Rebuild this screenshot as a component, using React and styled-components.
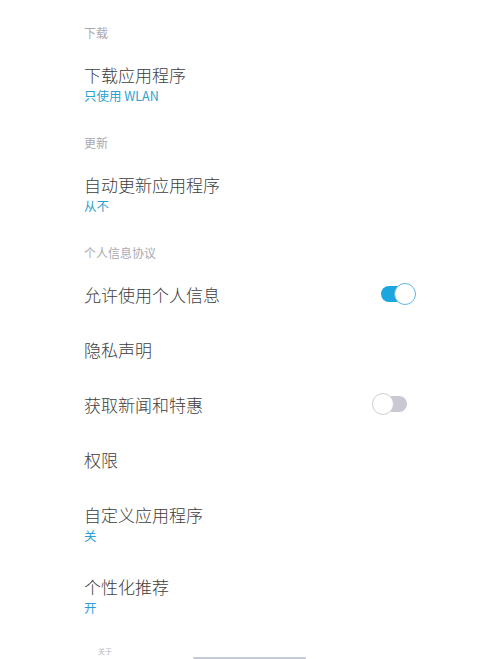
import React, { useState } from "react";
import styled, { createGlobalStyle } from "styled-components";

const Global = createGlobalStyle`
  html, body { margin: 0; padding: 0; background: #ffffff; }
  body { font-family: "Noto Sans CJK SC", "Noto Sans", sans-serif; overflow: hidden; }
`;

const Page = styled.div`
  width: 500px;
  height: 659px;
  overflow: hidden;
  position: relative;
  background: #fff;
  padding-top: 8.5px;
  box-sizing: border-box;
`;

const List = styled.div`
  display: flex;
  flex-direction: column;
  padding: 0 84px;
`;

const SectionHeader = styled.div`
  height: 38px;
  display: flex;
  align-items: flex-start;
  padding-top: 15px;
  box-sizing: border-box;
  font-size: 12px;
  line-height: 17px;
  color: #a9a9b1;
`;

const Row = styled.div`
  height: ${(p) => (p.$sub ? 72 : 55)}px;
  display: flex;
  align-items: ${(p) => (p.$sub ? "flex-start" : "center")};
  justify-content: space-between;
  box-sizing: border-box;
  padding-top: ${(p) => (p.$sub ? 15 : 0)}px;
`;

const Texts = styled.div`
  display: flex;
  flex-direction: column;
`;

const Title = styled.div`
  font-size: 17px;
  line-height: 25px;
  font-weight: 300;
  color: #3d3d3d;
`;

const Sub = styled.div`
  font-size: 12.5px;
  line-height: 18px;
  color: #2b9fd3;
`;

const SwitchBox = styled.button`
  position: relative;
  width: 44px;
  height: 24px;
  border: none;
  background: transparent;
  padding: 0;
  cursor: pointer;
  flex-shrink: 0;
`;

const Track = styled.span`
  position: absolute;
  top: 4px;
  left: ${(p) => (p.$on ? 9 : 5)}px;
  width: 30px;
  height: 16px;
  border-radius: 8px;
  background: ${(p) => (p.$on ? "#1ba6df" : "#c9c9d2")};
`;

const Knob = styled.span`
  position: absolute;
  top: 1px;
  left: ${(p) => (p.$on ? 22 : 0)}px;
  width: 22px;
  height: 22px;
  box-sizing: border-box;
  border-radius: 50%;
  background: #fff;
  border: 1px solid ${(p) => (p.$on ? "#5db7e2" : "#cfcfd4")};
`;

const Tiny = styled.div`
  height: 38px;
  padding-top: 16px;
  padding-left: 14px;
  box-sizing: border-box;
  font-size: 7px;
  line-height: 8px;
  color: #b8b8c0;
`;

const HomeBar = styled.div`
  position: absolute;
  left: 193px;
  bottom: 0;
  width: 113px;
  height: 2px;
  border-radius: 1px;
  background: #c6cad6;
`;

function Switch({ initial }) {
  const [on, setOn] = useState(initial);
  return (
    <SwitchBox $on={on} onClick={() => setOn(!on)} aria-pressed={on}>
      <Track $on={on} />
      <Knob $on={on} />
    </SwitchBox>
  );
}

function Item({ title, sub, toggle }) {
  return (
    <Row $sub={!!sub}>
      <Texts>
        <Title>{title}</Title>
        {sub && <Sub>{sub}</Sub>}
      </Texts>
      {toggle !== undefined && <Switch initial={toggle} />}
    </Row>
  );
}

export default function App() {
  return (
    <Page>
      <Global />
      <List>
        <SectionHeader>下载</SectionHeader>
        <Item title="下载应用程序" sub="只使用 WLAN" />
        <SectionHeader>更新</SectionHeader>
        <Item title="自动更新应用程序" sub="从不" />
        <SectionHeader>个人信息协议</SectionHeader>
        <Item title="允许使用个人信息" toggle={true} />
        <Item title="隐私声明" />
        <Item title="获取新闻和特惠" toggle={false} />
        <Item title="权限" />
        <Item title="自定义应用程序" sub="关" />
        <Item title="个性化推荐" sub="开" />
        <Tiny>关于</Tiny>
      </List>
      <HomeBar />
    </Page>
  );
}
